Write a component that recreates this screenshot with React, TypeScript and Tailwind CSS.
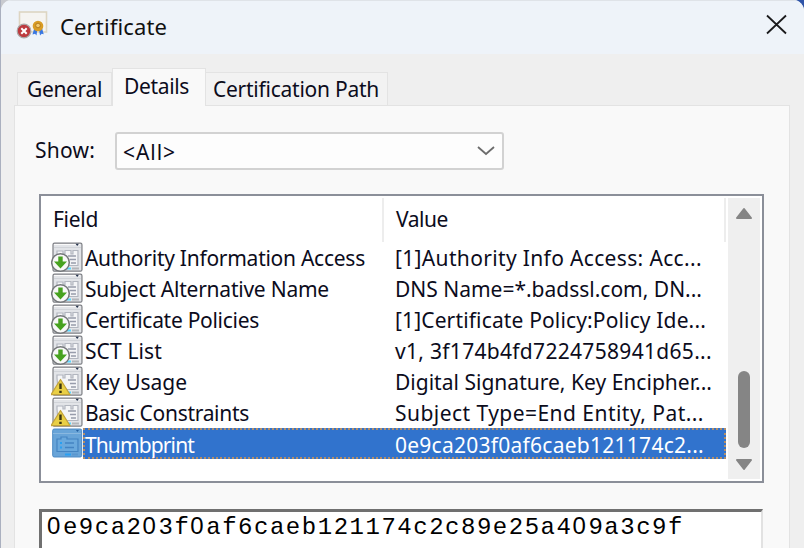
import { useLayoutEffect, useRef, useState } from "react";

type FitProps = { text: string; width: number; className?: string };

// Sets a label to an exact width by adjusting its tracking.
function Fit({ text, width, className = "" }: FitProps) {
  const ref = useRef<HTMLSpanElement>(null);
  const [spacing, setSpacing] = useState(0);
  useLayoutEffect(() => {
    if (ref.current) {
      const natural = ref.current.getBoundingClientRect().width - spacing * text.length;
      setSpacing((width - natural) / text.length);
    }
  }, [text, width]);
  return (
    <span ref={ref} className={`inline-block whitespace-pre ${className}`} style={{ letterSpacing: spacing }}>
      {text}
    </span>
  );
}

type Kind = "extension" | "critical" | "property";

const rows: { field: string; fw: number; value: string; vw: number; kind: Kind }[] = [
  { field: "Authority Information Access", fw: 280, value: "[1]Authority Info Access: Acc...", vw: 307, kind: "extension" },
  { field: "Subject Alternative Name", fw: 244, value: "DNS Name=*.badssl.com, DN...", vw: 307, kind: "extension" },
  { field: "Certificate Policies", fw: 174, value: "[1]Certificate Policy:Policy Ide...", vw: 311, kind: "extension" },
  { field: "SCT List", fw: 77, value: "v1, 3f174b4fd7224758941d65...", vw: 317, kind: "extension" },
  { field: "Key Usage", fw: 102, value: "Digital Signature, Key Encipher...", vw: 317, kind: "critical" },
  { field: "Basic Constraints", fw: 164, value: "Subject Type=End Entity, Pat...", vw: 309, kind: "critical" },
  { field: "Thumbprint", fw: 109, value: "0e9ca203f0af6caeb121174c2...", vw: 309, kind: "property" },
];

function RowIcon({ kind }: { kind: Kind }) {
  if (kind === "property") {
    return (
      <svg className="block" width="33" height="31" viewBox="0 0 33 31" fill="none">
        <rect x="1.700" y="1" width="29" height="28" rx="1.500" fill="#68a4d8" stroke="#4c8ac4" />
        <path d="M2 5.500h28" stroke="#8ab8e0" />
        <path d="M25 2h3l-1.500 2z" fill="#245f9f" />
        <path d="M6 11h4V9h6v2h11v12.500H6z" fill="#6aa9dd" stroke="#4484c2" strokeWidth="1.200" />
        <path d="M14 15h9M14 19.500h9" stroke="#4484c2" strokeWidth="1.400" />
        <path d="M9 15h2M9 19.500h2M14 26.500h6" stroke="#29a0f2" strokeWidth="2" />
        <path d="M21 26.500h6" stroke="#5b97cf" strokeWidth="2" />
      </svg>
    );
  }
  return (
    <svg className="block" width="33" height="31" viewBox="0 0 33 31" fill="none">
      <rect x="2" y="1.200" width="29" height="28" rx="1.500" fill="#e2e4e8" stroke="#7d7f84" strokeWidth="1.200" />
      <path d="M3 2.500h26" stroke="#fafafa" />
      <path d="M3 5.500h27" stroke="#d0d3d8" />
      <path d="M24.500 1.800h3.500l-1.700 2.200z" fill="#26344e" />
      <path d="M6 12V9h6v3h2V8.500h6V12h2V8.500h5V23.500H7z" fill="#f4f5f7" stroke="#b2b6bf" strokeWidth="1.200" />
      <path d="M17 14h8M19 17.500h6M20 21h5" stroke="#979cab" strokeWidth="1.300" />
      <path d="M16 26.500h4" stroke="#54d5ff" strokeWidth="2" />
      <path d="M21 26.500h7" stroke="#b3b6ba" strokeWidth="2" />
      {kind === "extension" ? (
        <>
          <circle cx="9.500" cy="20.500" r="8.800" fill="#f8f8f8" stroke="#74777a" strokeWidth="1.500" />
          <path d="M7.300 14.500h4.400v5h4.300l-6.500 7-6.500-7h4.300z" fill="#47a21f" />
        </>
      ) : (
        <>
          <path d="M9.500 13.500L19 28.700H0z" fill="#e9cf45" stroke="#c3a33a" strokeWidth="1.200" strokeLinejoin="round" />
          <path d="M9.500 17.500v5.500M9.500 24.700v2.300" stroke="#3a3511" strokeWidth="2.400" />
        </>
      )}
    </svg>
  );
}

function CertificateIcon() {
  return (
    <svg className="block" width="34" height="30" viewBox="0 0 34 30">
      <rect x="3.500" y="2" width="27" height="20" fill="#f5f4f1" stroke="#ddd5c2" strokeWidth="1.600" />
      <path d="M18 19l-1.500 5.500 2.500-.8 1.500 1.800.8-6zM23 19l1 6.500 1.700-1.800 2 .5L26 18z" fill="#3977e2" />
      <circle cx="22" cy="16" r="5.300" fill="#d99c24" />
      <circle cx="22" cy="15.500" r="2.300" fill="#f3ca70" stroke="#a86f13" strokeWidth=".8" />
      <circle cx="8" cy="21" r="6.800" fill="#bd3a3e" stroke="#aaa6a6" strokeWidth="1.200" />
      <path d="M5.300 18.300l5.400 5.400M10.700 18.300l-5.400 5.400" stroke="#fff" strokeWidth="2" />
    </svg>
  );
}

const thumbprint = "0e9ca203f0af6caeb121174c2c89e25a409a3c9f";

export default function App() {
  return (
    <div className="flex h-[548px] w-[804px] overflow-hidden bg-linear-to-r from-[#c8cacf] from-50% to-[#2e54a8] to-90% font-['Noto_Sans',sans-serif] text-[21px] leading-none text-[#0c0c1c]">
      <div className="h-full w-px bg-[#aab0bf]" />
      <div className="flex h-full w-[803px] flex-col overflow-hidden rounded-t-[11px] bg-[#efefef]">
        <header className="flex h-[54px] shrink-0 items-start justify-between border-t border-[#dfe3e8] bg-[#eef3f9]">
          <div className="flex pl-[15px] pt-[9px]">
            <CertificateIcon />
            <div className="ml-[10px] pt-[5px] text-[22px] text-[#111]"><Fit text="Certificate" width={107} /></div>
          </div>
          <svg className="mr-[16px] mt-[12px]" width="23" height="23" viewBox="0 0 23 23">
            <path d="M2 2.500l19 18M21 2.500L2 20.500" stroke="#1b1b1d" strokeWidth="1.800" />
          </svg>
        </header>
        <nav className="z-10 flex h-[52px] shrink-0 items-end pl-[16px]">
          <div className="mb-px h-[33px] w-[95px] border border-b-0 border-[#e3e3e3] bg-[#f2f2f2] pl-[9px] pt-[6px]"><Fit text="General" width={75} /></div>
          <div className="h-[38px] w-[94px] border border-b-0 border-[#e3e3e3] bg-[#f9f9f9] pl-[11px] pt-[7px]"><Fit text="Details" width={65} /></div>
          <div className="mb-px h-[33px] w-[182px] border border-b-0 border-l-0 border-[#e3e3e3] bg-[#f2f2f2] pl-[7px] pt-[6px]"><Fit text="Certification Path" width={166} /></div>
        </nav>
        <main className="-mt-px ml-[13px] flex w-[776px] grow flex-col border border-b-0 border-[#e3e3e3] bg-[#f9f9f9] pl-[24px] pt-[26px]">
          <div className="flex h-[38px] shrink-0">
            <div className="ml-[-4px] w-[80px] pt-[8px]"><Fit text="Show:" width={60} /></div>
            <div className="flex w-[389px] justify-between rounded-[3px] border-2 border-[#d2d2d2] bg-[#fdfdfd] pl-[6px] pr-[6px] pt-[8px]">
              <Fit text="<All>" width={53} />
              <svg width="20" height="20" viewBox="0 0 20 20" fill="none"><path d="M2 5l8 7 8-7" stroke="#6c6c6c" strokeWidth="1.800" /></svg>
            </div>
          </div>
          <div className="mt-[24px] flex h-[289px] w-[725px] shrink-0 border-2 border-[#8b8f99] bg-white">
            <div className="w-[685px] pt-[2px]">
              <div className="flex h-[44px]">
                <div className="w-[343px] border-r-2 border-[#ededed] pl-[12px] pt-[11px]"><Fit text="Field" width={45} /></div>
                <div className="w-[342px] border-r-2 border-[#ededed] pl-[12px] pt-[11px]"><Fit text="Value" width={52} /></div>
              </div>
              {rows.map((row) => (
                <div key={row.field} className="flex h-[31px] pl-[10px]">
                  <RowIcon kind={row.kind} />
                  <div className={row.kind === "property" ? "-ml-px flex h-[31px] w-[644px] border-2 border-dotted border-[#b28e68] bg-[#3173cd] pt-[5px] text-white" : "flex w-[643px] pl-px pt-[6px]"}>
                    <div className="w-[310px] shrink-0"><Fit text={row.field} width={row.fw} /></div>
                    <Fit text={row.value} width={row.vw} />
                  </div>
                </div>
              ))}
            </div>
            <div className="ml-[2px] mt-[2px] flex h-[281px] w-[32px] flex-col items-center bg-[#efefef]">
              <svg className="mt-[9px]" width="18" height="13" viewBox="0 0 18 13"><path d="M9 2l7 9H2z" fill="#858585" stroke="#858585" strokeWidth="2" strokeLinejoin="round" /></svg>
              <div className="mt-[151px] h-[77px] w-[12px] rounded-full bg-[#858585]" />
              <svg className="mt-[10px]" width="18" height="13" viewBox="0 0 18 13"><path d="M9 11l7-9H2z" fill="#858585" stroke="#858585" strokeWidth="2" strokeLinejoin="round" /></svg>
            </div>
          </div>
          <div className="mr-[26px] mt-[26px] grow overflow-hidden whitespace-nowrap border-l-[3px] border-r-2 border-t-[3px] border-[#707070] border-r-[#e2e2e2] bg-white pl-[5px] pt-[2px] font-['Liberation_Mono',monospace] text-[24px] text-black">
            {thumbprint.split(/(0)/).map((run, i) =>
              run === "0" ? (
                <span key={i} className="font-['Liberation_Sans',sans-serif] tracking-[2.570px]">{run}</span>
              ) : (
                <span key={i} className="tracking-[1.520px]">{run}</span>
              ),
            )}
          </div>
        </main>
      </div>
    </div>
  );
}
